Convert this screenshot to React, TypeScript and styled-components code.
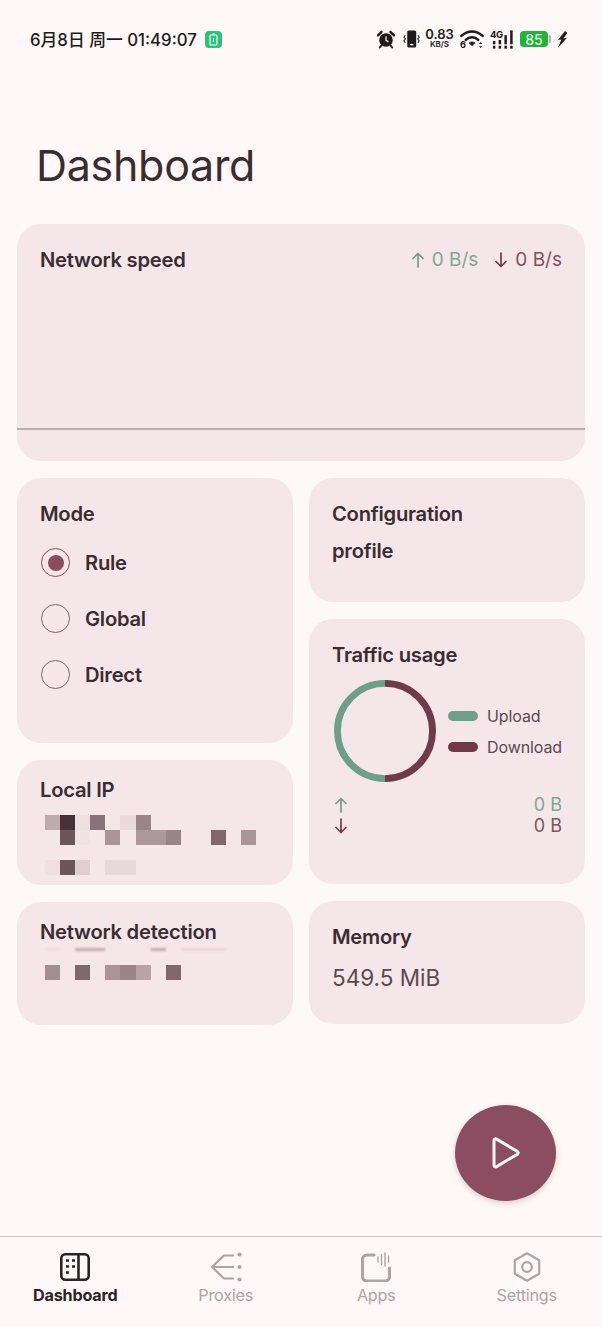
import React from "react";
import styled, { createGlobalStyle } from "styled-components";

const colors = {
  bg: "#fef9f8",
  card: "#f5e6e9",
  text: "#3a2d31",
  muted: "#5a4a4f",
  primary: "#8a4d62",
  maroon: "#6f3a4c",
  green: "#6d9f8b",
  greenText: "#7fa898",
  maroonText: "#7a5560",
  outline: "#bdb0b2",
  inactive: "#aaa5a6",
};

const GlobalStyle = createGlobalStyle`
  html, body {
    margin: 0;
    padding: 0;
    background: ${colors.bg};
  }
  * {
    box-sizing: border-box;
  }
`;

const Page = styled.div`
  position: relative;
  width: 602px;
  height: 1327px;
  display: flex;
  flex-direction: column;
  overflow: hidden;
  background: ${colors.bg};
  color: ${colors.text};
  font-family: Inter, "Noto Sans CJK SC", sans-serif;
`;

const StatusBar = styled.div`
  height: 78px;
  display: flex;
  align-items: center;
  justify-content: space-between;
  padding: 0 34px 0 30px;
  color: #1f1a1b;
`;

const StatusLeft = styled.div`
  display: flex;
  align-items: center;
  gap: 8px;
  font-size: 16.8px;
  font-weight: 500;
`;

const ChargeBadge = styled.div`
  width: 17px;
  height: 17px;
  border-radius: 4px;
  background: #2fc07f;
  display: flex;
  align-items: center;
  justify-content: center;
`;

const StatusRight = styled.div`
  display: flex;
  align-items: center;
  gap: 6px;
`;

const SpeedBlock = styled.div`
  width: 27px;
  display: flex;
  flex-direction: column;
  align-items: center;
  font-weight: 600;
  margin-right: 1px;
`;

const SpeedValue = styled.span`
  font-size: 13px;
  line-height: 11px;
`;

const SpeedUnit = styled.span`
  font-size: 8px;
  line-height: 9px;
`;

const Battery = styled.div`
  width: 31px;
  display: flex;
  align-items: center;
  gap: 1px;
`;

const BatteryBody = styled.div`
  width: 28px;
  height: 16px;
  border-radius: 4px;
  background: #22b33a;
  color: #e8f8e8;
  font-size: 14px;
  font-weight: 500;
  display: flex;
  align-items: center;
  justify-content: center;
`;

const BatteryCap = styled.div`
  width: 2px;
  height: 8px;
  border-radius: 0 2px 2px 0;
  background: #b4aeae;
`;

const Title = styled.h1`
  margin: 0;
  height: 146px;
  padding: 58px 0 0 36px;
  font-size: 43px;
  line-height: 58px;
  font-weight: 400;
  letter-spacing: -0.3px;
  color: ${colors.text};
`;

const Content = styled.main`
  flex: 1;
  display: flex;
  flex-direction: column;
  gap: 17px;
  padding: 0 17px;
`;

const Card = styled.section<{ $height: number }>`
  height: ${(p) => p.$height}px;
  padding: 22px 23px 0;
  border-radius: 24px;
  background: ${colors.card};
  overflow: hidden;
`;

const SpeedCard = styled(Card)`
  display: flex;
  flex-direction: column;
  padding: 0;
`;

const SpeedHeader = styled.div`
  display: flex;
  justify-content: space-between;
  align-items: flex-start;
  padding: 22px 23px 0;
  height: 204px;
`;

const SpeedBaseline = styled.div`
  height: 2px;
  background: ${colors.outline};
`;

const CardTitle = styled.h2`
  margin: 0;
  font-size: 20.2px;
  line-height: 27px;
  font-weight: 600;
  letter-spacing: -0.25px;
  color: ${colors.text};
`;

const WrappedTitle = styled(CardTitle)`
  width: 160px;
  line-height: 37px;
  margin-top: -5px;
`;

const Rates = styled.div`
  display: flex;
  align-items: center;
  gap: 17px;
  height: 27px;
`;

const Rate = styled.span<{ $color: string }>`
  display: flex;
  align-items: center;
  gap: 8px;
  font-size: 19px;
  color: ${(p) => p.$color};
`;

const Columns = styled.div`
  display: grid;
  grid-template-columns: 276px 276px;
  gap: 16px;
`;

const Column = styled.div`
  display: flex;
  flex-direction: column;
  gap: 17px;
`;

const RadioList = styled.div`
  display: flex;
  flex-direction: column;
  gap: 27px;
  margin-top: 21px;
`;

const RadioRow = styled.div`
  display: flex;
  align-items: center;
  gap: 15px;
  padding-left: 1px;
  font-size: 20.2px;
  line-height: 29px;
  font-weight: 600;
  letter-spacing: -0.25px;
`;

const RadioCircle = styled.div<{ $checked?: boolean }>`
  width: 29px;
  height: 29px;
  border-radius: 50%;
  border: 1.5px solid ${(p) => (p.$checked ? colors.primary : "#7a666c")};
  display: flex;
  align-items: center;
  justify-content: center;
`;

const RadioDot = styled.div`
  width: 16px;
  height: 16px;
  border-radius: 50%;
  background: ${colors.primary};
`;

const Mosaic = styled.div`
  display: grid;
  grid-template-columns: repeat(14, 15.1px);
  grid-auto-rows: 15px;
  margin: 2px 0 0 5px;
  filter: blur(0.5px);
`;

const IpMosaic = styled(Mosaic)`
  margin-top: 12px;
`;

const Tile = styled.div<{ $tone: number }>`
  background: rgba(62, 38, 46, ${(p) => p.$tone});
`;

const Streaks = styled(Mosaic)`
  grid-auto-rows: 3px;
  margin: 3px 0 14px 5px;
  filter: blur(1px);
`;

const LocalIpTitle = styled(CardTitle)`
  margin-top: -6px;
`;

const DetectionTitle = styled(CardTitle)`
  margin-top: -6px;
`;

const UsageBody = styled.div`
  display: flex;
  align-items: center;
  gap: 12px;
  margin-top: 11px;
  margin-left: 2px;
`;

const Legend = styled.div`
  display: flex;
  flex-direction: column;
  gap: 9px;
`;

const LegendRow = styled.div`
  display: flex;
  align-items: center;
  gap: 9px;
  font-size: 16px;
  line-height: 22px;
  letter-spacing: -0.1px;
  color: ${colors.muted};
`;

const Swatch = styled.div<{ $color: string }>`
  width: 30px;
  height: 10px;
  border-radius: 5px;
  background: ${(p) => p.$color};
`;

const TotalsRow = styled.div<{ $color: string }>`
  display: flex;
  align-items: center;
  justify-content: space-between;
  height: 21px;
  font-size: 18px;
  color: ${(p) => p.$color};
  svg {
    margin-left: 3px;
  }
`;

const Totals = styled.div`
  margin-top: 11px;
`;

const MemoryValue = styled.div`
  margin-top: 14px;
  font-size: 22.5px;
  color: ${colors.muted};
`;

const Fab = styled.button`
  position: absolute;
  left: 455px;
  top: 1105px;
  width: 101px;
  height: 96px;
  border: 0;
  border-radius: 50%;
  background: ${colors.primary};
  box-shadow: 0 2px 6px rgba(80, 40, 55, 0.22);
  display: flex;
  align-items: center;
  justify-content: center;
`;

const BottomNav = styled.nav`
  height: 91px;
  display: grid;
  grid-template-columns: repeat(4, 1fr);
  border-top: 1.5px solid #c8bfc0;
`;

const NavItem = styled.div<{ $active?: boolean }>`
  display: flex;
  flex-direction: column;
  align-items: center;
  padding-top: 13px;
  font-size: 16.2px;
  line-height: 22px;
  letter-spacing: -0.2px;
  font-weight: ${(p) => (p.$active ? 700 : 400)};
  color: ${(p) => (p.$active ? "#2c2326" : colors.inactive)};
`;

const NavIcon = styled.div`
  height: 34px;
  display: flex;
  align-items: center;
  justify-content: center;
`;

// small arrow used by the speed and traffic figures
const Arrow = ({ up, color }: { up?: boolean; color: string }) => (
  <svg width="12" height="16" viewBox="0 0 12 16" fill="none" stroke={color} strokeWidth="1.7" strokeLinecap="round" strokeLinejoin="round">
    {up ? <path d="M6 15V1.500M1 6.500L6 1.500l5 5" /> : <path d="M6 1v13.500M1 9.500l5 5 5-5" />}
  </svg>
);

const AlarmIcon = () => (
  <svg width="18" height="19" viewBox="0 0 19 19" style={{ marginRight: 2 }}>
    <circle cx="9.500" cy="10" r="7.200" fill="#1f1a1b" />
    <path d="M1 5.200L4.800 1.400M18 5.200L14.200 1.400" stroke="#1f1a1b" strokeWidth="2.400" strokeLinecap="round" />
    <path d="M4.600 15.800L3 18M14.400 15.800L16 18" stroke="#1f1a1b" strokeWidth="2" strokeLinecap="round" />
    <path d="M9.500 6v4.400l2.600 1.600" stroke="#fef9f8" strokeWidth="1.300" fill="none" />
  </svg>
);

const VibrateIcon = () => (
  <svg width="17" height="20" viewBox="0 0 18 20" fill="none">
    <rect x="4.500" y="1" width="9.500" height="18" rx="1.600" fill="#1f1a1b" />
    <rect x="7.400" y="15.200" width="3.600" height="1.500" fill="#fef9f8" />
    <path d="M2.400 6L1 8l1.600 2L1 12l1.400 2M15.800 6l1.400 2-1.600 2 1.600 2-1.400 2" stroke="#1f1a1b" strokeWidth="1.100" />
  </svg>
);

const WifiIcon = () => (
  <svg width="24" height="20" viewBox="0 0 25 20" fill="none" stroke="#1f1a1b" strokeLinecap="round">
    <path d="M1.500 6.800C8 .6 17 .6 23.500 6.800" strokeWidth="2.600" />
    <path d="M6 11c3.800-3.600 9.200-3.600 13 0" strokeWidth="2.600" />
    <path d="M12.500 17l-3-3c1.800-1.300 4.200-1.300 6 0z" fill="#1f1a1b" strokeWidth="0.800" />
    <path d="M21.500 13.200l1.800 2h-3.600zM21.500 19.500l1.800-2h-3.600z" fill="#1f1a1b" strokeWidth="0" />
    <text x="0" y="19.500" fontSize="9.500" fontWeight="700" fill="#1f1a1b" stroke="none" fontFamily="Inter, sans-serif">6</text>
  </svg>
);

const SignalIcon = () => (
  <svg width="24" height="21" viewBox="0 0 25 21" fill="#1f1a1b">
    <text x="0" y="8.500" fontSize="10" fontWeight="700" letterSpacing="-0.5" fontFamily="Inter, sans-serif">4G</text>
    {[3, 9, 15, 21].map((x, i) => (
      <g key={x}>
        <rect x={x} y={17} width="2.600" height="3" />
        <rect x={x} y={[12, 11, 6, 1][i]} width="2.600" height={[3.500, 4.500, 9.500, 14.500][i]} />
      </g>
    ))}
  </svg>
);

const BoltIcon = () => (
  <svg width="11" height="17" viewBox="0 0 11 17" fill="#1f1a1b">
    <path d="M8 0L1 9l3.400-.6L0.800 17 10 6.800l-3.600.7L10.400 2z" />
  </svg>
);

const DashboardIcon = () => (
  <svg width="30" height="28" viewBox="0 0 30 28" fill="none" stroke="#2c2326">
    <rect x="1.300" y="1.300" width="27.400" height="25.400" rx="4" strokeWidth="2.600" />
    <path d="M18.500 1.500v25" strokeWidth="2.600" />
    <path d="M6 7.500h3M12 7.500h3M6 13.500h3M12 13.500h3M6 19.500h3" strokeWidth="2.400" />
  </svg>
);

const ProxiesIcon = () => (
  <svg width="32" height="30" viewBox="0 0 32 30" fill="none" stroke={colors.inactive} strokeWidth="2.200" strokeLinecap="round" strokeLinejoin="round">
    <path d="M23 3.500h-9L2 15l12 11.500h9M2 15h21" />
    <circle cx="29.500" cy="2.500" r="2.100" fill={colors.inactive} stroke="none" />
    <circle cx="29.500" cy="15" r="2.100" fill={colors.inactive} stroke="none" />
    <circle cx="29.500" cy="27.500" r="2.100" fill={colors.inactive} stroke="none" />
  </svg>
);

const AppsIcon = () => (
  <svg width="30" height="30" viewBox="0 0 30 30" fill="none" stroke={colors.inactive} strokeLinecap="round">
    <path d="M13 3H6a4.500 4.500 0 0 0-4.500 4.500v17A4.500 4.500 0 0 0 6 29h18a4.500 4.500 0 0 0 4.500-4.500V16" strokeWidth="3.200" />
    <path d="M17 5v5M20.500 2.500v10M24 1v13M27.500 4v6" strokeWidth="1.400" />
  </svg>
);

const SettingsIcon = () => (
  <svg width="28" height="30" viewBox="0 0 28 30" fill="none" stroke={colors.inactive} strokeWidth="2.200" strokeLinejoin="round">
    <path d="M14 1.300l12.200 7v13.400L14 28.700 1.800 21.700V8.300z" />
    <circle cx="14" cy="15" r="4.800" />
  </svg>
);

const PlayIcon = () => (
  <svg width="30" height="32" viewBox="0 0 30 32" fill="none" stroke="#fef9f8" strokeWidth="3" strokeLinejoin="round">
    <path d="M3 3.500c0-1.400 1.300-2 2.500-1.400l21 12.400c1 .6 1 2.100 0 2.700l-21 12.400C4.300 30.300 3 29.700 3 28.300z" />
  </svg>
);

const UsageRing = () => (
  <svg width="104" height="104" viewBox="0 0 104 104" fill="none" strokeWidth="7">
    <path d="M52 3.500a48.500 48.500 0 0 0 0 97" stroke={colors.green} />
    <path d="M52 3.500a48.500 48.500 0 0 1 0 97" stroke={colors.maroon} />
  </svg>
);

// blurred-out address tiles, one number per cell (0 leaves the cell empty)
const localIpTiles = [
  [0.3, 0.95, 0.03, 0.6, 0, 0.06, 0.5, 0, 0, 0, 0, 0, 0, 0],
  [0, 0.75, 0.02, 0, 0.42, 0, 0.4, 0.4, 0.5, 0, 0, 0.65, 0, 0.42],
  [0, 0, 0, 0, 0, 0, 0, 0, 0, 0, 0, 0, 0, 0],
  [0.03, 0.75, 0.12, 0, 0.07, 0.07, 0, 0, 0, 0, 0, 0, 0, 0],
];

const detectionStreaks = [0.03, 0, 0.3, 0.3, 0, 0, 0, 0.3, 0, 0.08, 0.08, 0.08, 0, 0];
const detectionTiles = [0.45, 0, 0.65, 0, 0.42, 0.5, 0.34, 0, 0.65, 0, 0, 0, 0, 0];

const navItems = [
  { label: "Dashboard", icon: <DashboardIcon />, active: true },
  { label: "Proxies", icon: <ProxiesIcon /> },
  { label: "Apps", icon: <AppsIcon /> },
  { label: "Settings", icon: <SettingsIcon /> },
];

export default function App() {
  return (
    <Page>
      <GlobalStyle />
      <StatusBar>
        <StatusLeft>
          <span>6月8日 周一 01:49:07</span>
          <ChargeBadge>
            <svg width="9" height="13" viewBox="0 0 9 13" fill="none" stroke="#e9fff3" strokeWidth="1.200">
              <rect x="1" y="2" width="7" height="10" rx="1" />
              <path d="M3.200 1h2.600M4.500 5v4" />
            </svg>
          </ChargeBadge>
        </StatusLeft>
        <StatusRight>
          <AlarmIcon />
          <VibrateIcon />
          <SpeedBlock>
            <SpeedValue>0.83</SpeedValue>
            <SpeedUnit>KB/S</SpeedUnit>
          </SpeedBlock>
          <WifiIcon />
          <SignalIcon />
          <Battery>
            <BatteryBody>85</BatteryBody>
            <BatteryCap />
          </Battery>
          <BoltIcon />
        </StatusRight>
      </StatusBar>

      <Title>Dashboard</Title>

      <Content>
        <SpeedCard $height={237}>
          <SpeedHeader>
            <CardTitle>Network speed</CardTitle>
            <Rates>
              <Rate $color={colors.greenText}>
                <Arrow up color={colors.green} />0 B/s
              </Rate>
              <Rate $color={colors.maroonText}>
                <Arrow color={colors.maroon} />0 B/s
              </Rate>
            </Rates>
          </SpeedHeader>
          <SpeedBaseline />
        </SpeedCard>

        <Columns>
          <Column>
            <Card $height={265}>
              <CardTitle>Mode</CardTitle>
              <RadioList>
                <RadioRow>
                  <RadioCircle $checked>
                    <RadioDot />
                  </RadioCircle>
                  Rule
                </RadioRow>
                <RadioRow>
                  <RadioCircle />
                  Global
                </RadioRow>
                <RadioRow>
                  <RadioCircle />
                  Direct
                </RadioRow>
              </RadioList>
            </Card>
            <Card $height={125}>
              <LocalIpTitle>Local IP</LocalIpTitle>
              <IpMosaic>
                {localIpTiles.flat().map((tone, i) => (
                  <Tile key={i} $tone={tone} />
                ))}
              </IpMosaic>
            </Card>
            <Card $height={123}>
              <DetectionTitle>Network detection</DetectionTitle>
              <Streaks>
                {detectionStreaks.map((tone, i) => (
                  <Tile key={i} $tone={tone} />
                ))}
              </Streaks>
              <Mosaic>
                {detectionTiles.map((tone, i) => (
                  <Tile key={i} $tone={tone} />
                ))}
              </Mosaic>
            </Card>
          </Column>

          <Column>
            <Card $height={124}>
              <WrappedTitle>Configuration profile</WrappedTitle>
            </Card>
            <Card $height={265}>
              <CardTitle>Traffic usage</CardTitle>
              <UsageBody>
                <UsageRing />
                <Legend>
                  <LegendRow>
                    <Swatch $color={colors.green} />
                    Upload
                  </LegendRow>
                  <LegendRow>
                    <Swatch $color={colors.maroon} />
                    Download
                  </LegendRow>
                </Legend>
              </UsageBody>
              <Totals>
                <TotalsRow $color={colors.greenText}>
                  <Arrow up color={colors.green} />
                  <span>0 B</span>
                </TotalsRow>
                <TotalsRow $color={colors.maroonText}>
                  <Arrow color={colors.maroon} />
                  <span>0 B</span>
                </TotalsRow>
              </Totals>
            </Card>
            <Card $height={123}>
              <CardTitle>Memory</CardTitle>
              <MemoryValue>549.5 MiB</MemoryValue>
            </Card>
          </Column>
        </Columns>
      </Content>

      <Fab aria-label="Start">
        <PlayIcon />
      </Fab>

      <BottomNav>
        {navItems.map((item) => (
          <NavItem key={item.label} $active={item.active}>
            <NavIcon>{item.icon}</NavIcon>
            {item.label}
          </NavItem>
        ))}
      </BottomNav>
    </Page>
  );
}
